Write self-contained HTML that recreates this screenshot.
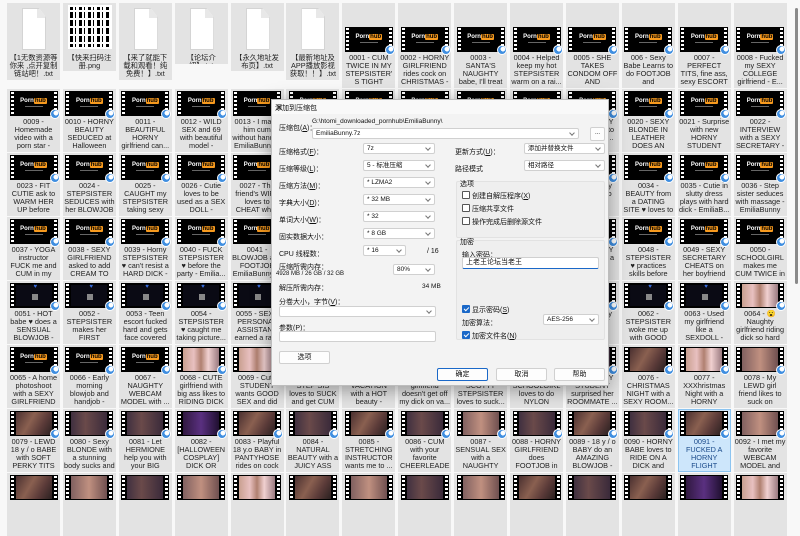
<!DOCTYPE html>
<html><head><meta charset="utf-8"><style>
*{box-sizing:border-box;margin:0;padding:0}
body{width:800px;height:482px;overflow:hidden;background:#f8f8f8;font-family:"Liberation Sans","Noto Sans CJK SC",sans-serif;position:relative}
.grid{position:absolute;left:7px;display:grid;grid-template-columns:repeat(14,53px);column-gap:2.9px;row-gap:1px}
.g1{top:3px;align-items:start}
.g2{top:89px;grid-auto-rows:63px}
.t{background:#e3e3e3;overflow:hidden;position:relative}
.t.sel{background:#cde6fb;outline:1px solid #8cc4f0;outline-offset:-1px}
.l{font-size:7.3px;line-height:8.1px;text-align:center;color:#222;padding:0 1px;height:32.4px;overflow:hidden;margin-top:2px;word-wrap:break-word}
.g1 .t{height:85px}
.g1 .top{height:49px;position:relative}
.g1 .top .th{position:absolute;left:2.5px;top:24px;margin:0}
.th{position:relative;width:48px;height:25px;margin:2px auto 0;background:#000}
.th::before,.th::after{content:'';position:absolute;top:1px;bottom:1px;width:3px;background:repeating-linear-gradient(#fff 0 2px,#000 2px 4px)}
.th::before{left:1px}.th::after{right:1px}
.ph{position:absolute;left:0;right:0;top:7px;text-align:center;font:bold 6px "Liberation Sans",sans-serif;color:#fff}
.ph b{background:#f79a1e;color:#000;padding:0 1px;border-radius:1px}
.ph i{display:block;height:1px;width:18px;margin:2px auto 0;background:#666}
.bd{position:absolute;right:-2px;bottom:-3px;width:10px;height:10px;border-radius:50%;background:radial-gradient(circle at 62% 38%,#fff 0 32%,#3f8ee0 36% 100%);border:1px solid #fff;z-index:2}
.dk .in{position:absolute;left:6px;right:6px;top:2px;bottom:2px;background:#0a0a14}
.dk .in::before{content:'♥';position:absolute;top:-1px;left:18px;color:#3a6fe0;font-size:6px}
.dk .in::after{content:'';position:absolute;left:16px;top:9px;width:6px;height:6px;background:#888}
.ph1 .in,.ph2 .in,.ph3 .in,.ph4 .in,.ph5 .in{position:absolute;left:6px;right:6px;top:1px;bottom:1px}
.ph1 .in{background:linear-gradient(90deg,#c9a090,#e8c0c0 30%,#b08070 50%,#f0d0d0 70%,#9a7a80)}
.ph2 .in{background:linear-gradient(120deg,#4a3030,#8a6050 40%,#5a3a38 70%,#2a2020)}
.ph3 .in{background:linear-gradient(90deg,#403040,#6a4a4a 40%,#3a2a3a)}
.ph4 .in{background:linear-gradient(90deg,#301840,#5a3080 50%,#201030)}
.ph5 .in{background:linear-gradient(90deg,#806060,#c09080 50%,#705050)}
.txt{position:absolute;left:15px;top:5px;width:24px;height:42px;background:#fff;border:1px solid #d4d4d4;clip-path:polygon(0 0,70% 0,100% 22%,100% 100%,0 100%)}
.txt::after{content:'';position:absolute;right:0;top:0;width:8px;height:9px;background:#e8e8e8}
.qr{position:absolute;left:5px;top:2px;width:44px;height:44px;background:
repeating-linear-gradient(90deg,#000 0 3px,#fff 3px 5px,#000 5px 6px,#fff 6px 9px),#fff;border:2px solid #fff}
.qr::before{content:'';position:absolute;inset:0;background:repeating-linear-gradient(0deg,transparent 0 3px,#fff 3px 5px,transparent 5px 8px)}
.scroll{position:absolute;left:795px;top:8px;width:3px;height:276px;background:#8a8a8a;border-radius:2px}
.dlg{position:absolute;z-index:10;left:271px;top:99px;width:338px;height:287px;background:#f3f3f3;border:1px solid #bdbdbd;box-shadow:0 4px 18px rgba(0,0,0,.35);font-size:7px;color:#111}
.dlg div,.dlg span{position:absolute}
.ttl{left:0;top:0;right:0;height:14px;background:#f9f9f9}
.ttl span{left:3px;top:3px}
.x{right:5px;top:1px;font-size:10px;color:#333}
.cb{background:#fff;border:1px solid #d0d0d0;border-radius:2px;height:11px;padding:1px 3px;white-space:nowrap;line-height:8px;font-size:6.5px}
.cb::after{content:'';position:absolute;right:4px;top:2px;width:3px;height:3px;border-right:1px solid #777;border-bottom:1px solid #777;transform:rotate(45deg)}
.cb.n::after{display:none}
.btn{background:#fdfdfd;border:1px solid #d0d0d0;border-radius:2px;height:13px;text-align:center;line-height:11px}
.grp{border:1px solid #e2e2e2;background:#efefef;border-radius:2px}
.ck{width:8px;height:8px;border:1px solid #555;border-radius:1px;background:#fff}
.ck.on{background:#1a68c8;border-color:#1a68c8}
.ck.on::after{content:'';position:absolute;left:2px;top:0;width:2px;height:4px;border-right:1px solid #fff;border-bottom:1px solid #fff;transform:rotate(45deg)}
</style></head><body>

<div class="grid g1">
<div class="t" style="height:77px"><div class="top"><div class="txt"></div></div><div class="l">【1无数资源等你来 ,点开复制链站吧！.txt</div></div>
<div class="t" style="height:68px"><div class="top"><div class="qr"></div></div><div class="l">【快来扫码注册.png</div></div>
<div class="t" style="height:77px"><div class="top"><div class="txt"></div></div><div class="l">【来了就能下载和观看！纯免费！】.txt</div></div>
<div class="t" style="height:61px"><div class="top"><div class="txt"></div></div><div class="l">【论坛介绍】.txt</div></div>
<div class="t" style="height:68px"><div class="top"><div class="txt"></div></div><div class="l">【永久地址发布页】.txt</div></div>
<div class="t" style="height:77px"><div class="top"><div class="txt"></div></div><div class="l">【最新地址及APP播放影视获取！！】.txt</div></div>
<div class="t"><div class="top"><div class="th"><div class="ph">Porn<b>hub</b><i></i></div><span class="bd"></span></div></div><div class="l">0001 - CUM TWICE IN MY STEPSISTER'S TIGHT PUSSY ...</div></div>
<div class="t"><div class="top"><div class="th"><div class="ph">Porn<b>hub</b><i></i></div><span class="bd"></span></div></div><div class="l">0002 - HORNY GIRLFRIEND rides cock on CHRISTMAS - ...</div></div>
<div class="t"><div class="top"><div class="th"><div class="ph">Porn<b>hub</b><i></i></div><span class="bd"></span></div></div><div class="l">0003 - SANTA'S NAUGHTY babe, I'll treat your BALLS wi...</div></div>
<div class="t"><div class="top"><div class="th"><div class="ph">Porn<b>hub</b><i></i></div><span class="bd"></span></div></div><div class="l">0004 - Helped keep my hot STEPSISTER warm on a rai...</div></div>
<div class="t"><div class="top"><div class="th"><div class="ph">Porn<b>hub</b><i></i></div><span class="bd"></span></div></div><div class="l">0005 - SHE TAKES CONDOM OFF AND SWALLO...</div></div>
<div class="t"><div class="top"><div class="th"><div class="ph">Porn<b>hub</b><i></i></div><span class="bd"></span></div></div><div class="l">006 - Sexy Babe Learns to do FOOTJOB and DEEPTHROAT ...</div></div>
<div class="t"><div class="top"><div class="th"><div class="ph">Porn<b>hub</b><i></i></div><span class="bd"></span></div></div><div class="l">0007 - PERFECT TITS, fine ass, sexy ESCORT babe - EmiliaB...</div></div>
<div class="t"><div class="top"><div class="th"><div class="ph">Porn<b>hub</b><i></i></div><span class="bd"></span></div></div><div class="l">0008 - Fucked my SEXY COLLEGE girlfriend - E...</div></div>
</div>

<div class="grid g2">
<div class="t"><div class="th"><div class="ph">Porn<b>hub</b><i></i></div><span class="bd"></span></div><div class="l">0009 - Homemade video with a porn star - Em...</div></div>
<div class="t"><div class="th"><div class="ph">Porn<b>hub</b><i></i></div><span class="bd"></span></div><div class="l">0010 - HORNY BEAUTY SEDUCED at Halloween PA...</div></div>
<div class="t"><div class="th"><div class="ph">Porn<b>hub</b><i></i></div><span class="bd"></span></div><div class="l">0011 - BEAUTIFUL HORNY girlfriend can...</div></div>
<div class="t"><div class="th"><div class="ph">Porn<b>hub</b><i></i></div><span class="bd"></span></div><div class="l">0012 - WILD SEX and 69 with beautiful model - EmiliaBunny ...</div></div>
<div class="t"><div class="th"><div class="ph">Porn<b>hub</b><i></i></div><span class="bd"></span></div><div class="l">0013 - I made him cum without hands - EmiliaBunny...</div></div>
<div class="t"><div class="th"><div class="ph">Porn<b>hub</b><i></i></div><span class="bd"></span></div><div class="l">0014</div></div>
<div class="t"><div class="th"><div class="ph">Porn<b>hub</b><i></i></div><span class="bd"></span></div><div class="l">0015</div></div>
<div class="t"><div class="th"><div class="ph">Porn<b>hub</b><i></i></div><span class="bd"></span></div><div class="l">0016</div></div>
<div class="t"><div class="th"><div class="ph">Porn<b>hub</b><i></i></div><span class="bd"></span></div><div class="l">0017</div></div>
<div class="t"><div class="th"><div class="ph">Porn<b>hub</b><i></i></div><span class="bd"></span></div><div class="l">0018</div></div>
<div class="t"><div class="th"><div class="ph">Porn<b>hub</b><i></i></div><span class="bd"></span></div><div class="l">0019 - SEXY babe loves to SUCK and ...</div></div>
<div class="t"><div class="th"><div class="ph">Porn<b>hub</b><i></i></div><span class="bd"></span></div><div class="l">0020 - SEXY BLONDE IN LEATHER DOES AN AMAZING...</div></div>
<div class="t"><div class="th"><div class="ph">Porn<b>hub</b><i></i></div><span class="bd"></span></div><div class="l">0021 - Surprise with new HORNY STUDENT cos...</div></div>
<div class="t"><div class="th"><div class="ph">Porn<b>hub</b><i></i></div><span class="bd"></span></div><div class="l">0022 - INTERVIEW with a SEXY SECRETARY - ...</div></div>
<div class="t"><div class="th"><div class="ph">Porn<b>hub</b><i></i></div><span class="bd"></span></div><div class="l">0023 - FIT CUTIE ask to WARM HER UP before TRAIN...</div></div>
<div class="t"><div class="th"><div class="ph">Porn<b>hub</b><i></i></div><span class="bd"></span></div><div class="l">0024 - STEPSISTER SEDUCES with her BLOWJOB ...</div></div>
<div class="t"><div class="th"><div class="ph">Porn<b>hub</b><i></i></div><span class="bd"></span></div><div class="l">0025 - CAUGHT my STEPSISTER taking sexy photos - Emili...</div></div>
<div class="t"><div class="th"><div class="ph">Porn<b>hub</b><i></i></div><span class="bd"></span></div><div class="l">0026 - Cutie loves to be used as a SEX DOLL - Emilia...</div></div>
<div class="t"><div class="th"><div class="ph">Porn<b>hub</b><i></i></div><span class="bd"></span></div><div class="l">0027 - The friend's WIFE loves to CHEAT while her hu...</div></div>
<div class="t"><div class="th"><div class="ph">Porn<b>hub</b><i></i></div><span class="bd"></span></div><div class="l">0028</div></div>
<div class="t"><div class="th"><div class="ph">Porn<b>hub</b><i></i></div><span class="bd"></span></div><div class="l">0029</div></div>
<div class="t"><div class="th"><div class="ph">Porn<b>hub</b><i></i></div><span class="bd"></span></div><div class="l">0030</div></div>
<div class="t"><div class="th"><div class="ph">Porn<b>hub</b><i></i></div><span class="bd"></span></div><div class="l">0031</div></div>
<div class="t"><div class="th"><div class="ph">Porn<b>hub</b><i></i></div><span class="bd"></span></div><div class="l">0032</div></div>
<div class="t"><div class="th"><div class="ph">Porn<b>hub</b><i></i></div><span class="bd"></span></div><div class="l">0033 - Sexy doll loves to SUCK ...</div></div>
<div class="t"><div class="th"><div class="ph">Porn<b>hub</b><i></i></div><span class="bd"></span></div><div class="l">0034 - BEAUTY from a DATING SITE ♥ loves to SUCK dick ...</div></div>
<div class="t"><div class="th"><div class="ph">Porn<b>hub</b><i></i></div><span class="bd"></span></div><div class="l">0035 - Cutie in slutty dress plays with hard dick - EmiliaB...</div></div>
<div class="t"><div class="th"><div class="ph">Porn<b>hub</b><i></i></div><span class="bd"></span></div><div class="l">0036 - Step sister seduces with massage - EmiliaBunny (...</div></div>
<div class="t"><div class="th"><div class="ph">Porn<b>hub</b><i></i></div><span class="bd"></span></div><div class="l">0037 - YOGA instructor FUCK me and CUM in my mouth - E...</div></div>
<div class="t"><div class="th"><div class="ph">Porn<b>hub</b><i></i></div><span class="bd"></span></div><div class="l">0038 - SEXY GIRLFRIEND asked to add CREAM TO H...</div></div>
<div class="t"><div class="th"><div class="ph">Porn<b>hub</b><i></i></div><span class="bd"></span></div><div class="l">0039 - Horny STEPSISTER ♥ can't resist a HARD DICK - ...</div></div>
<div class="t"><div class="th"><div class="ph">Porn<b>hub</b><i></i></div><span class="bd"></span></div><div class="l">0040 - FUCK STEPSISTER ♥ before the party - Emilia...</div></div>
<div class="t"><div class="th"><div class="ph">Porn<b>hub</b><i></i></div><span class="bd"></span></div><div class="l">0041 - BLOWJOB and FOOTJOB EmiliaBunny ...</div></div>
<div class="t"><div class="th"><div class="ph">Porn<b>hub</b><i></i></div><span class="bd"></span></div><div class="l">0042</div></div>
<div class="t"><div class="th"><div class="ph">Porn<b>hub</b><i></i></div><span class="bd"></span></div><div class="l">0043</div></div>
<div class="t"><div class="th"><div class="ph">Porn<b>hub</b><i></i></div><span class="bd"></span></div><div class="l">0044</div></div>
<div class="t"><div class="th"><div class="ph">Porn<b>hub</b><i></i></div><span class="bd"></span></div><div class="l">0045</div></div>
<div class="t"><div class="th"><div class="ph">Porn<b>hub</b><i></i></div><span class="bd"></span></div><div class="l">0046</div></div>
<div class="t"><div class="th"><div class="ph">Porn<b>hub</b><i></i></div><span class="bd"></span></div><div class="l">0047 - SEXY nurse gives a ...</div></div>
<div class="t"><div class="th"><div class="ph">Porn<b>hub</b><i></i></div><span class="bd"></span></div><div class="l">0048 - STEPSISTER ♥ practices skills before Meeti...</div></div>
<div class="t"><div class="th"><div class="ph">Porn<b>hub</b><i></i></div><span class="bd"></span></div><div class="l">0049 - SEXY SECRETARY CHEATS on her boyfriend wit...</div></div>
<div class="t"><div class="th"><div class="ph">Porn<b>hub</b><i></i></div><span class="bd"></span></div><div class="l">0050 - SCHOOLGIRL makes me CUM TWICE in her ...</div></div>
<div class="t"><div class="th dk"><div class="in"></div><span class="bd"></span></div><div class="l">0051 - HOT babe ♥ does a SENSUAL BLOWJOB - E...</div></div>
<div class="t"><div class="th dk"><div class="in"></div><span class="bd"></span></div><div class="l">0052 - STEPSISTER makes her FIRST BLOWJ...</div></div>
<div class="t"><div class="th dk"><div class="in"></div><span class="bd"></span></div><div class="l">0053 - Teen escort fucked hard and gets face covered i...</div></div>
<div class="t"><div class="th dk"><div class="in"></div><span class="bd"></span></div><div class="l">0054 - STEPSISTER ♥ caught me taking picture...</div></div>
<div class="t"><div class="th dk"><div class="in"></div><span class="bd"></span></div><div class="l">0055 - SEXY PERSONAL ASSISTANT earned a rai...</div></div>
<div class="t"><div class="th dk"><div class="in"></div><span class="bd"></span></div><div class="l">0056</div></div>
<div class="t"><div class="th dk"><div class="in"></div><span class="bd"></span></div><div class="l">0057</div></div>
<div class="t"><div class="th dk"><div class="in"></div><span class="bd"></span></div><div class="l">0058</div></div>
<div class="t"><div class="th dk"><div class="in"></div><span class="bd"></span></div><div class="l">0059</div></div>
<div class="t"><div class="th dk"><div class="in"></div><span class="bd"></span></div><div class="l">0060</div></div>
<div class="t"><div class="th dk"><div class="in"></div><span class="bd"></span></div><div class="l">0061 - Sexy STUDENT loves ...</div></div>
<div class="t"><div class="th dk"><div class="in"></div><span class="bd"></span></div><div class="l">0062 - STEPSISTER woke me up with GOOD SE...</div></div>
<div class="t"><div class="th dk"><div class="in"></div><span class="bd"></span></div><div class="l">0063 - Used my girlfriend like a SEXDOLL - EmiliaBunny (...</div></div>
<div class="t"><div class="th ph1"><div class="in"></div><span class="bd"></span></div><div class="l">0064 - 😮 Naughty girlfriend riding dick so hard a...</div></div>
<div class="t"><div class="th"><div class="ph">Porn<b>hub</b><i></i></div><span class="bd"></span></div><div class="l">0065 - A home photoshoot with a SEXY GIRLFRIEND t...</div></div>
<div class="t"><div class="th"><div class="ph">Porn<b>hub</b><i></i></div><span class="bd"></span></div><div class="l">0066 - Early morning blowjob and handjob - Emil...</div></div>
<div class="t"><div class="th"><div class="ph">Porn<b>hub</b><i></i></div><span class="bd"></span></div><div class="l">0067 - NAUGHTY WEBCAM MODEL with ...</div></div>
<div class="t"><div class="th ph1"><div class="in"></div><span class="bd"></span></div><div class="l">0068 - CUTE girlfriend with big ass likes to RIDING DICK ...</div></div>
<div class="t"><div class="th ph1"><div class="in"></div><span class="bd"></span></div><div class="l">0069 - Cute STUDENT wants GOOD SEX and did FOOTJOB ...</div></div>
<div class="t"><div class="th ph5"><div class="in"></div><span class="bd"></span></div><div class="l">0070 - CUTE STEP SIS loves to SUCK and get CUM IN H...</div></div>
<div class="t"><div class="th ph2"><div class="in"></div><span class="bd"></span></div><div class="l">0071 - VACATION with a HOT beauty - EmiliaBunny (...</div></div>
<div class="t"><div class="th ph3"><div class="in"></div><span class="bd"></span></div><div class="l">0072 - Sexy girlfriend doesn't get off my dick on va...</div></div>
<div class="t"><div class="th ph5"><div class="in"></div><span class="bd"></span></div><div class="l">0073 - SCOTTY STEPSISTER loves to suck...</div></div>
<div class="t"><div class="th ph2"><div class="in"></div><span class="bd"></span></div><div class="l">0074 - SCHOOLGIRL loves to do NYLON FOOT...</div></div>
<div class="t"><div class="th ph3"><div class="in"></div><span class="bd"></span></div><div class="l">0075 - SEXY STUDENT surprised her ROOMMATE ...</div></div>
<div class="t"><div class="th ph2"><div class="in"></div><span class="bd"></span></div><div class="l">0076 - CHRISTMAS NIGHT with a SEXY ROOM...</div></div>
<div class="t"><div class="th ph1"><div class="in"></div><span class="bd"></span></div><div class="l">0077 - XXXhristmas Night with a HORNY BEAU...</div></div>
<div class="t"><div class="th ph5"><div class="in"></div><span class="bd"></span></div><div class="l">0078 - My LEWD girl friend likes to suck on camer...</div></div>
<div class="t"><div class="th ph2"><div class="in"></div><span class="bd"></span></div><div class="l">0079 - LEWD 18 y / o BABE with SOFT PERKY TITS gave gre...</div></div>
<div class="t"><div class="th ph3"><div class="in"></div><span class="bd"></span></div><div class="l">0080 - Sexy BLONDE with a stunning body sucks and rid...</div></div>
<div class="t"><div class="th ph3"><div class="in"></div><span class="bd"></span></div><div class="l">0081 - Let HERMIONE help you with your BIG MAG...</div></div>
<div class="t"><div class="th ph4"><div class="in"></div><span class="bd"></span></div><div class="l">0082 - [HALLOWEEN COSPLAY] DICK OR TREAT - E...</div></div>
<div class="t"><div class="th ph2"><div class="in"></div><span class="bd"></span></div><div class="l">0083 - Playful 18 y.o BABY in PANTYHOSE rides on cock ...</div></div>
<div class="t"><div class="th ph3"><div class="in"></div><span class="bd"></span></div><div class="l">0084 - NATURAL BEAUTY with a JUICY ASS rid...</div></div>
<div class="t"><div class="th ph2"><div class="in"></div><span class="bd"></span></div><div class="l">0085 - STRETCHING INSTRUCTOR wants me to ...</div></div>
<div class="t"><div class="th ph3"><div class="in"></div><span class="bd"></span></div><div class="l">0086 - CUM with your favorite CHEERLEADE...</div></div>
<div class="t"><div class="th ph5"><div class="in"></div><span class="bd"></span></div><div class="l">0087 - SENSUAL SEX with a NAUGHTY RO...</div></div>
<div class="t"><div class="th ph3"><div class="in"></div><span class="bd"></span></div><div class="l">0088 - HORNY GIRLFRIEND does FOOTJOB in stockings a...</div></div>
<div class="t"><div class="th ph2"><div class="in"></div><span class="bd"></span></div><div class="l">0089 - 18 y / o BABY do an AMAZING BLOWJOB - E...</div></div>
<div class="t"><div class="th ph3"><div class="in"></div><span class="bd"></span></div><div class="l">0090 - HORNY BABE loves to RIDE ON A DICK and SWALLO...</div></div>
<div class="t sel"><div class="th ph2"><div class="in"></div><span class="bd"></span></div><div class="l" style="color:#1a4a8a">0091 - FUCKED A HORNY FLIGHT ATTENDANT i...</div></div>
<div class="t"><div class="th ph5"><div class="in"></div><span class="bd"></span></div><div class="l">0092 - I met my favorite WEBCAM MODEL and F...</div></div>
<div class="t"><div class="th ph2"><div class="in"></div></div></div>
<div class="t"><div class="th ph5"><div class="in"></div></div></div>
<div class="t"><div class="th ph3"><div class="in"></div></div></div>
<div class="t"><div class="th ph5"><div class="in"></div></div></div>
<div class="t"><div class="th ph1"><div class="in"></div></div></div>
<div class="t"><div class="th ph2"><div class="in"></div></div></div>
<div class="t"><div class="th ph5"><div class="in"></div></div></div>
<div class="t"><div class="th ph3"><div class="in"></div></div></div>
<div class="t"><div class="th ph5"><div class="in"></div></div></div>
<div class="t"><div class="th ph2"><div class="in"></div></div></div>
<div class="t"><div class="th ph3"><div class="in"></div></div></div>
<div class="t"><div class="th ph2"><div class="in"></div></div></div>
<div class="t"><div class="th ph4"><div class="in"></div></div></div>
<div class="t"><div class="th ph1"><div class="in"></div></div></div>
</div>

<div class="scroll"></div>

<div class="dlg">
<div class="ttl"><span>添加到压缩包</span><span class="x">✕</span></div>
<span style="left:7px;top:23px">压缩包(<u>A</u>)：</span>
<span style="left:40px;top:18px;font-size:6.5px">G:\htomi_downloaded_pornhub\EmiliaBunny\</span>
<div class="cb" style="left:40px;top:28px;width:267px">EmiliaBunny.7z</div>
<div class="btn" style="left:318px;top:27px;width:15px;height:14px;font-size:6px">...</div>

<span style="left:7px;top:47px">压缩格式(<u>F</u>)：</span><div class="cb" style="left:91px;top:43px;width:72px">7z</div>
<span style="left:7px;top:64px">压缩等级(<u>L</u>)：</span><div class="cb" style="left:91px;top:60px;width:72px">5 - 标准压缩</div>
<span style="left:7px;top:81px">压缩方法(<u>M</u>)：</span><div class="cb" style="left:91px;top:77px;width:72px">* LZMA2</div>
<span style="left:7px;top:98px">字典大小(<u>D</u>)：</span><div class="cb" style="left:91px;top:94px;width:72px">* 32 MB</div>
<span style="left:7px;top:115px">单词大小(<u>W</u>)：</span><div class="cb" style="left:91px;top:111px;width:72px">* 32</div>
<span style="left:7px;top:132px">固实数据大小：</span><div class="cb" style="left:91px;top:128px;width:72px">* 8 GB</div>
<span style="left:7px;top:149px">CPU 线程数：</span><div class="cb" style="left:91px;top:145px;width:43px">* 16</div><span style="left:155px;top:148px">/ 16</span>
<span style="left:7px;top:162px">压缩所需内存：</span><span style="left:4px;top:171px;font-size:6px">4928 MB / 26 GB / 32 GB</span>
<div class="cb" style="left:121px;top:164px;width:42px">80%</div>
<span style="left:7px;top:183px">解压所需内存：</span><span style="left:150px;top:183px;font-size:6.5px">34 MB</span>
<span style="left:7px;top:197px">分卷大小，字节(<u>V</u>)：</span><div class="cb" style="left:7px;top:206px;width:157px"></div>
<span style="left:7px;top:223px">参数(<u>P</u>)：</span><div class="cb n" style="left:7px;top:231px;width:157px"></div>
<div class="btn" style="left:7px;top:251px;width:51px">选项</div>

<span style="left:183px;top:47px">更新方式(<u>U</u>)：</span><div class="cb" style="left:252px;top:43px;width:81px">添加并替换文件</div>
<span style="left:183px;top:64px">路径模式</span><div class="cb" style="left:252px;top:60px;width:81px">相对路径</div>

<div class="grp" style="left:184px;top:81px;width:149px;height:57px"></div>
<span style="left:188px;top:79px">选项</span>
<div class="ck" style="left:190px;top:91px"></div><span style="left:200px;top:91px">创建自解压程序(<u>X</u>)</span>
<div class="ck" style="left:190px;top:104px"></div><span style="left:200px;top:104px">压缩共享文件</span>
<div class="ck" style="left:190px;top:117px"></div><span style="left:200px;top:117px">操作完成后删除源文件</span>

<div class="grp" style="left:184px;top:140px;width:149px;height:100px"></div>
<span style="left:188px;top:137px">加密</span>
<span style="left:190px;top:150px">输入密码：</span>
<div class="cb n" style="left:190px;top:157px;width:137px;height:12px;border-bottom:1.5px solid #1a68c8;font-size:7px">上老王论坛当老王</div>
<div class="ck on" style="left:190px;top:205px"></div><span style="left:200px;top:205px">显示密码(<u>S</u>)</span>
<span style="left:190px;top:218px">加密算法：</span><div class="cb" style="left:271px;top:214px;width:56px">AES-256</div>
<div class="ck on" style="left:190px;top:231px"></div><span style="left:200px;top:231px">加密文件名(<u>N</u>)</span>

<div class="btn" style="left:165px;top:268px;width:51px;border-color:#1a68c8">确定</div>
<div class="btn" style="left:224px;top:268px;width:51px">取消</div>
<div class="btn" style="left:282px;top:268px;width:51px">帮助</div>
</div>
</body></html>
